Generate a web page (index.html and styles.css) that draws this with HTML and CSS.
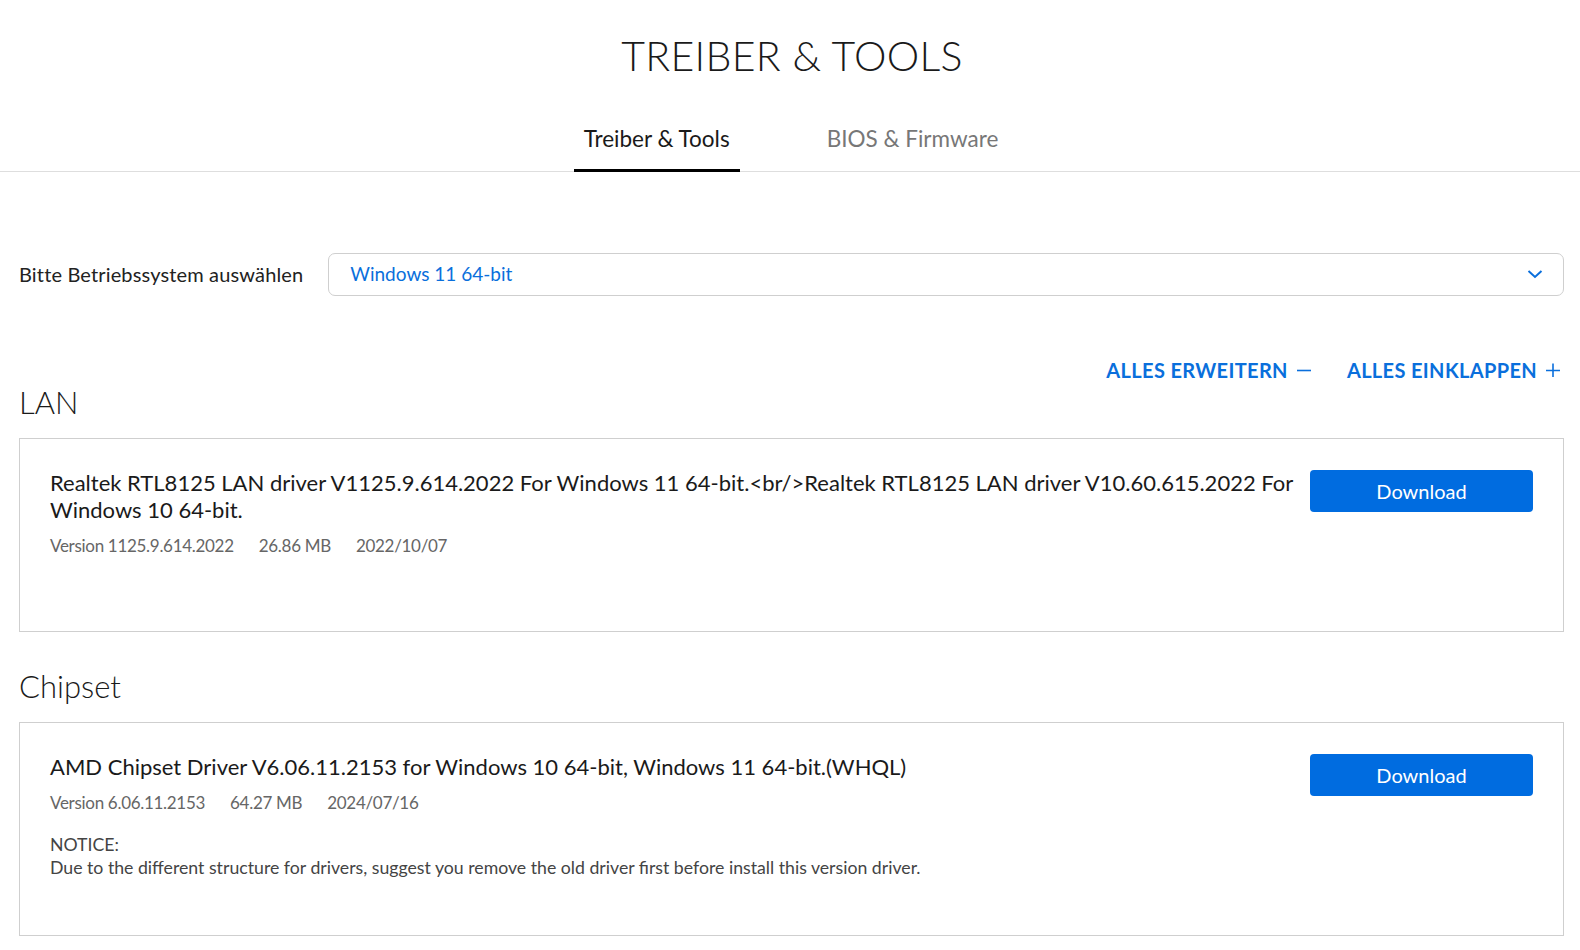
FILE: index.html
```
<!DOCTYPE html>
<html lang="de">
<head>
<meta charset="utf-8">
<title>Treiber &amp; Tools</title>
<link rel="stylesheet" href="styles.css">
</head>
<body>
<header class="head">
  <h1 class="title">TREIBER &amp; TOOLS</h1>
  <nav class="tabs">
    <a class="tab active">Treiber &amp; Tools</a>
    <a class="tab">BIOS &amp; Firmware</a>
  </nav>
</header>
<main class="main">
  <div class="os-row">
    <span class="os-label">Bitte Betriebssystem auswählen</span>
    <div class="select">
      <span class="select-value">Windows 11 64-bit</span>
      <svg class="chev" width="16" height="10" viewBox="0 0 16 10"><path d="M1.5 2 L8 8 L14.5 2" fill="none" stroke="#0a6fdc" stroke-width="2"/></svg>
    </div>
  </div>
  <div class="toggles">
    <a class="toggle">ALLES ERWEITERN <svg class="sym" width="14" height="14" viewBox="0 0 14 14"><path d="M0 7.5 H14" stroke="#0a6fdc" stroke-width="1.6"/></svg></a>
    <a class="toggle">ALLES EINKLAPPEN <svg class="sym" width="14" height="14" viewBox="0 0 14 14"><path d="M0 7.5 H14 M7 0.5 V14.5" stroke="#0a6fdc" stroke-width="1.6"/></svg></a>
  </div>
  <section class="group">
    <h2 class="group-title lan">LAN</h2>
    <div class="card card-lan">
      <div class="info">
        <p class="name">Realtek RTL8125 LAN driver V1125.9.614.2022 For Windows 11 64-bit.&lt;br/&gt;Realtek RTL8125 LAN driver V10.60.615.2022 For Windows 10 64-bit.</p>
        <p class="meta"><span>Version 1125.9.614.2022</span><span>26.86 MB</span><span>2022/10/07</span></p>
      </div>
      <a class="btn">Download</a>
    </div>
  </section>
  <section class="group">
    <h2 class="group-title">Chipset</h2>
    <div class="card card-chip">
      <div class="info">
        <p class="name">AMD Chipset Driver V6.06.11.2153 for Windows 10 64-bit, Windows 11 64-bit.(WHQL)</p>
        <p class="meta"><span>Version 6.06.11.2153</span><span>64.27 MB</span><span>2024/07/16</span></p>
        <p class="notice">NOTICE:<br>Due to the different structure for drivers, suggest you remove the old driver first before install this version driver.</p>
      </div>
      <a class="btn">Download</a>
    </div>
  </section>
</main>
</body>
</html>
```
FILE: styles.css
```
* { box-sizing: border-box; }
html, body { margin: 0; padding: 0; background: #fff; }
body {
  font-family: Lato, "Noto Sans", sans-serif;
  color: #1a1a1a;
  overflow: hidden;
}
.head {
  border-bottom: 1px solid #dedede;
  text-align: center;
}
.title {
  margin: 0;
  padding-top: 30px;
  font-size: 41px;
  font-weight: 300;
  letter-spacing: 0.3px;
  line-height: 52px;
  color: #1a1a1a;
  padding-left: 4px;
}
.tabs {
  display: flex;
  justify-content: center;
  gap: 77px;
  margin-top: 42px;
  padding-left: 2px;
}
.tab {
  display: block;
  font-size: 22.5px;
  line-height: 28px;
  padding: 1px 10px 16px;
  color: #777;
  border-bottom: 3px solid transparent;
  margin-bottom: -1px;
}
.tab.active {
  color: #1a1a1a;
  border-bottom-color: #000;
}
.main {
  padding: 0 16px 0 19px;
}
.os-row {
  display: flex;
  align-items: center;
  gap: 25px;
  margin-top: 81px;
}
.os-label {
  font-size: 20px;
  letter-spacing: 0.15px;
  color: #222;
  white-space: nowrap;
  margin-top: -2px;
}
.select {
  flex: 1;
  height: 43px;
  border: 1px solid #cfcfcf;
  border-radius: 7px;
  display: flex;
  align-items: center;
  justify-content: space-between;
  padding: 0 20px 2px 21px;
}
.select-value {
  color: #0a6fdc;
  font-size: 19px;
}
.toggles {
  display: flex;
  justify-content: flex-end;
  gap: 36px;
  margin-top: 61px;
  padding-right: 4px;
  height: 25px;
}
.toggle {
  display: flex;
  align-items: center;
  color: #0a6fdc;
  font-size: 20px;
  font-weight: 700;
  letter-spacing: 0.35px;
  line-height: 24px;
}
.toggle .sym { margin-left: 9px; }
.group-title {
  margin: 0;
  font-size: 31px;
  font-weight: 300;
  line-height: 36px;
  color: #1a1a1a;
}
.group-title.lan { margin-top: 2px; }
.group + .group .group-title { margin-top: 36px; }
.card {
  margin-top: 18px;
  border: 1px solid #cfcfcf;
  display: flex;
  align-items: flex-start;
  gap: 10px;
  padding: 30px 30px 30px 30px;
}
.card-lan { height: 194px; }
.card-chip { height: 214px; }
.info { flex: 1; }
.name {
  margin: 0;
  font-size: 22px;
  line-height: 27px;
  color: #1a1a1a;
}
.meta {
  margin: 12px 0 0;
  font-size: 17px;
  color: #666;
  display: flex;
  gap: 25px;
  letter-spacing: -0.3px;
}
.notice {
  margin: 20px 0 0;
  font-size: 17.7px;
  line-height: 23px;
  color: #444;
}
.btn {
  flex: none;
  width: 223px;
  height: 42px;
  background: #006ce0;
  color: #fff;
  border-radius: 4px;
  display: flex;
  align-items: center;
  justify-content: center;
  font-size: 20px;
  margin-top: 1px;
}
```
